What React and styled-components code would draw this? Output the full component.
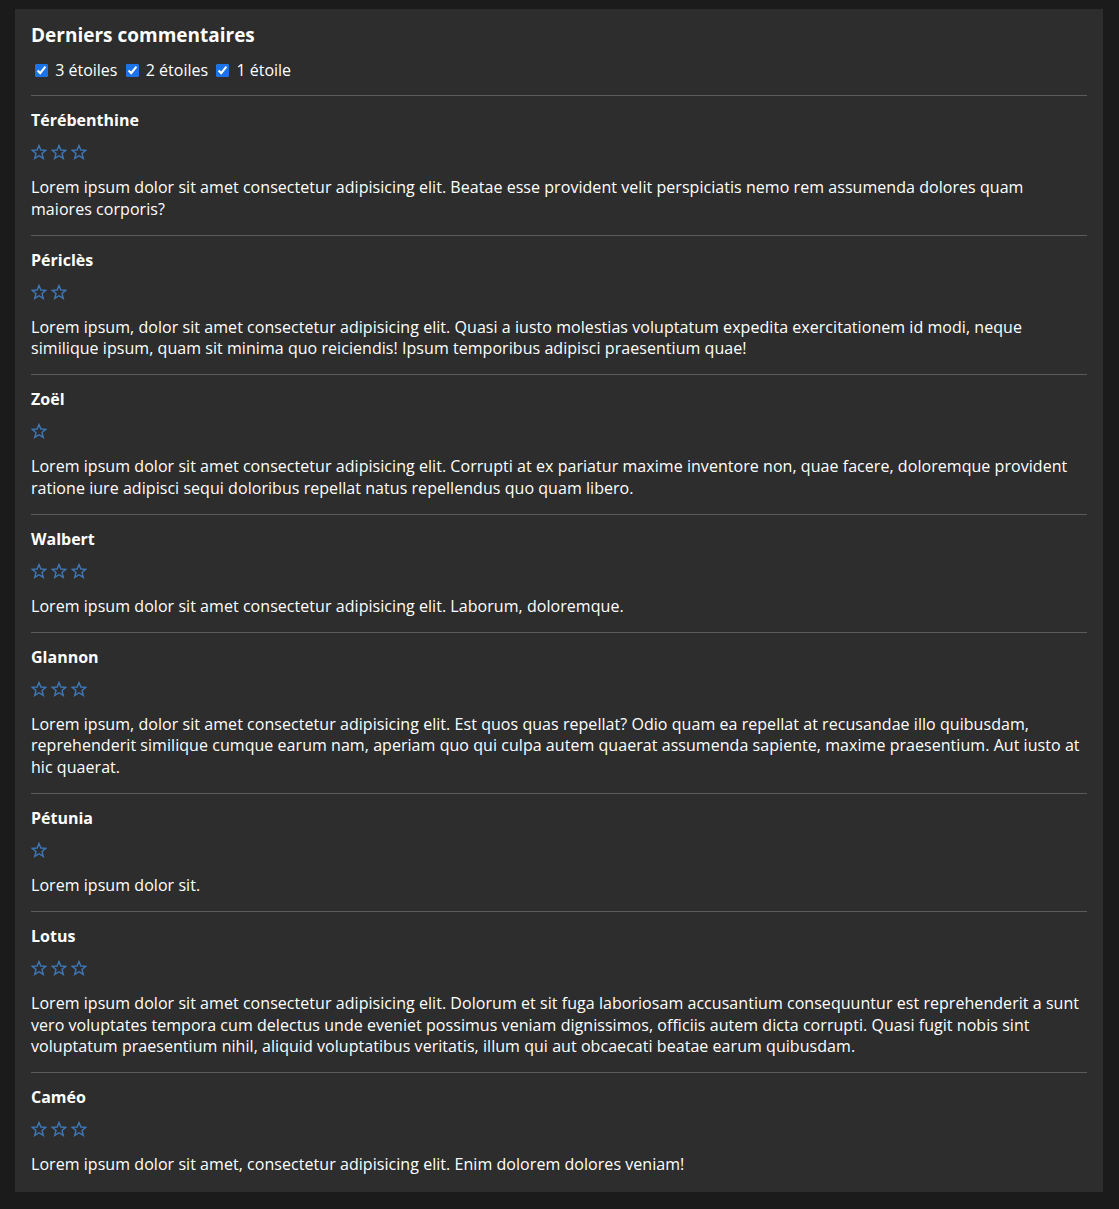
import React from "react";
import styled, { createGlobalStyle } from "styled-components";

const Global = createGlobalStyle`
  html, body { margin: 0; padding: 0; background: #1b1b1b; }
  body { font-family: "Open Sans", "Noto Sans", sans-serif; color: #fff; font-size: 16px; }
`;

const Page = styled.div`
  padding: 9px 16px 18px 15px;
`;

const Panel = styled.section`
  background: #2d2d2d;
  padding: 12px 16px 16px 16px;
`;

const Title = styled.h2`
  margin: 0;
  font-size: 19px;
  font-weight: 700;
  line-height: 28px;
`;

const Filters = styled.div`
  margin-top: 10px;
  font-size: 16px;
  line-height: 22px;
`;

const FilterLabel = styled.label`
  white-space: nowrap;
`;

const Check = styled.input`
  width: 13px;
  height: 13px;
  margin: 3px 3px 3px 4px;
  vertical-align: -1px;
  accent-color: #1a73e8;
`;

const Comment = styled.article`
  border-top: 1px solid #5a5a5a;
  margin-top: ${(p) => (p.$first ? "14px" : "14px")};
  padding-top: 13px;
`;

const Name = styled.h3`
  margin: 0;
  font-size: 16px;
  font-weight: 700;
  line-height: 22px;
`;

const Stars = styled.div`
  display: flex;
  gap: 4px;
  margin-top: 13px;
  height: 16px;
  align-items: center;
`;

const Text = styled.p`
  margin: 17px 0 0;
  font-size: 16px;
  line-height: 21.8px;
  letter-spacing: 0.05px;
`;

const Star = () => (
  <svg width="16" height="16" viewBox="0 0 24 24" fill="none" stroke="#3d78b8" strokeWidth="2.1" strokeLinejoin="miter">
    <polygon points="12,2.3 14.8,9.1 22.2,9.6 16.5,14.3 18.4,21.6 12,17.6 5.6,21.6 7.5,14.3 1.8,9.6 9.2,9.1" />
  </svg>
);

const comments = [
  { name: "Térébenthine", stars: 3, text: "Lorem ipsum dolor sit amet consectetur adipisicing elit. Beatae esse provident velit perspiciatis nemo rem assumenda dolores quam maiores corporis?" },
  { name: "Périclès", stars: 2, text: "Lorem ipsum, dolor sit amet consectetur adipisicing elit. Quasi a iusto molestias voluptatum expedita exercitationem id modi, neque similique ipsum, quam sit minima quo reiciendis! Ipsum temporibus adipisci praesentium quae!" },
  { name: "Zoël", stars: 1, text: "Lorem ipsum dolor sit amet consectetur adipisicing elit. Corrupti at ex pariatur maxime inventore non, quae facere, doloremque provident ratione iure adipisci sequi doloribus repellat natus repellendus quo quam libero." },
  { name: "Walbert", stars: 3, text: "Lorem ipsum dolor sit amet consectetur adipisicing elit. Laborum, doloremque." },
  { name: "Glannon", stars: 3, text: "Lorem ipsum, dolor sit amet consectetur adipisicing elit. Est quos quas repellat? Odio quam ea repellat at recusandae illo quibusdam, reprehenderit similique cumque earum nam, aperiam quo qui culpa autem quaerat assumenda sapiente, maxime praesentium. Aut iusto at hic quaerat." },
  { name: "Pétunia", stars: 1, text: "Lorem ipsum dolor sit." },
  { name: "Lotus", stars: 3, text: "Lorem ipsum dolor sit amet consectetur adipisicing elit. Dolorum et sit fuga laboriosam accusantium consequuntur est reprehenderit a sunt vero voluptates tempora cum delectus unde eveniet possimus veniam dignissimos, officiis autem dicta corrupti. Quasi fugit nobis sint voluptatum praesentium nihil, aliquid voluptatibus veritatis, illum qui aut obcaecati beatae earum quibusdam." },
  { name: "Caméo", stars: 3, text: "Lorem ipsum dolor sit amet, consectetur adipisicing elit. Enim dolorem dolores veniam!" },
];

export default function App() {
  return (
    <Page>
      <Global />
      <Panel>
        <Title>Derniers commentaires</Title>
        <Filters>
          <FilterLabel><Check type="checkbox" defaultChecked /> 3 étoiles</FilterLabel>{" "}
          <FilterLabel><Check type="checkbox" defaultChecked /> 2 étoiles</FilterLabel>{" "}
          <FilterLabel><Check type="checkbox" defaultChecked /> 1 étoile</FilterLabel>
        </Filters>
        {comments.map((c, i) => (
          <Comment key={c.name} $first={i === 0}>
            <Name>{c.name}</Name>
            <Stars>
              {Array.from({ length: c.stars }).map((_, j) => <Star key={j} />)}
            </Stars>
            <Text>{c.text}</Text>
          </Comment>
        ))}
      </Panel>
    </Page>
  );
}
